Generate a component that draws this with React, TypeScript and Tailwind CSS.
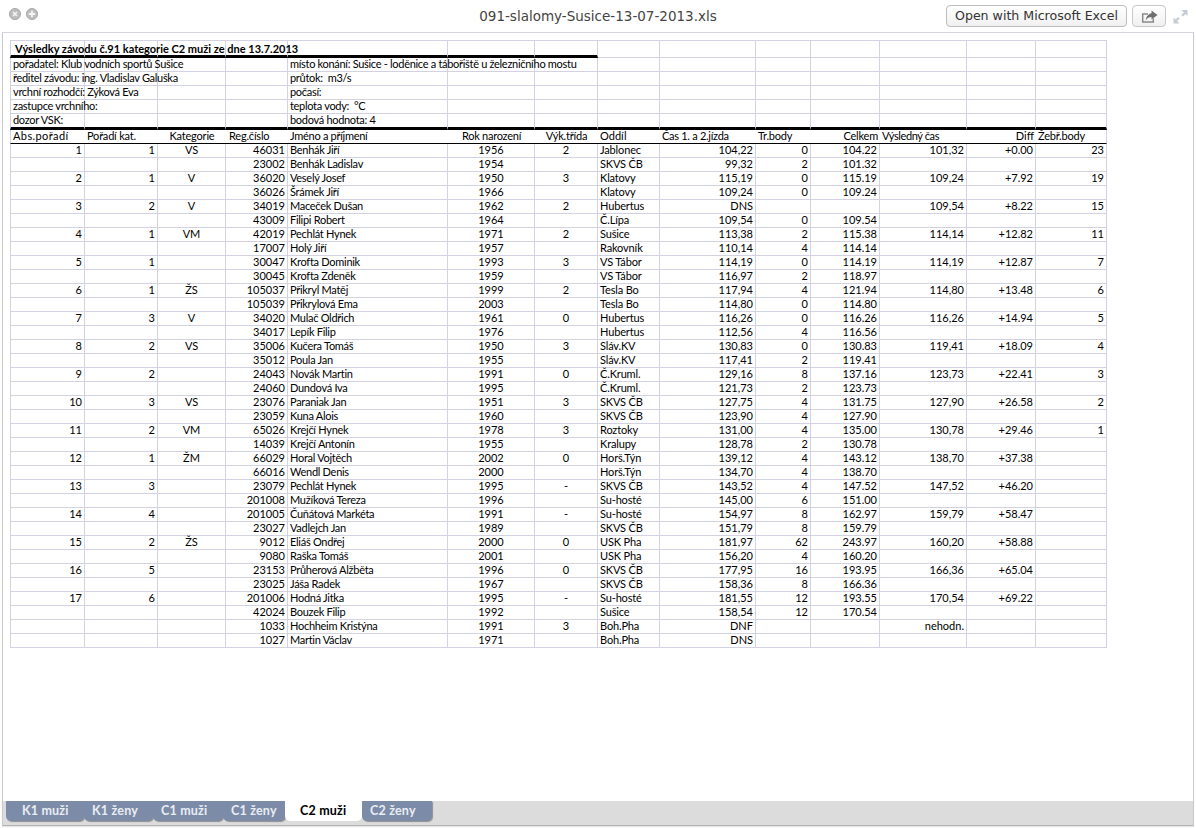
const widths = [75, 73, 68, 62, 160, 87, 63, 62, 96, 55, 69, 87, 69, 71];
const aligns = [
  "text-right",
  "text-right",
  "text-center",
  "text-right",
  "text-left tracking-[-0.28px]",
  "text-center",
  "text-center",
  "text-left tracking-[-0.15px]",
  "text-right",
  "text-right",
  "text-right",
  "text-right",
  "text-right",
  "text-right",
];

const headers = [
  ["Abs.pořadí", "text-left tracking-[0.4px]"],
  ["Pořadí kat.", "text-left pl-[2px] tracking-[-0.2px]"],
  ["Kategorie", "text-center tracking-[-0.2px]"],
  ["Reg.číslo", "text-left tracking-[-0.2px] pl-[3px]"],
  ["Jméno a příjmení", "text-left tracking-[-0.28px]"],
  ["Rok narození", "text-center tracking-[-0.25px]"],
  ["Výk.třída", "text-center tracking-[-0.2px]"],
  ["Oddíl", "text-left"],
  ["Čas 1. a 2.jízda", "text-left tracking-[-0.28px]"],
  ["Tr.body", "text-left tracking-[-0.2px]"],
  ["Celkem", "text-right tracking-[-0.2px]"],
  ["Výsledný čas", "text-left tracking-[-0.4px]"],
  ["Diff", "text-right"],
  ["Žebř.body", "text-left tracking-[-0.2px]"],
];

const info = [
  ["pořadatel: Klub vodních sportů Sušice", "místo konání: Sušice - loděnice a tábořiště u železničního mostu"],
  ["ředitel závodu: ing. Vladislav Galuška", "průtok:  m3/s"],
  ["vrchní rozhodčí: Zýková Eva", "počasí:"],
  ["zastupce vrchního:", "teplota vody:  °C"],
  ["dozor VSK:", "bodová hodnota: 4"],
];

const rows = `1|1|VS|46031|Benhák Jiří|1956|2|Jablonec|104,22|0|104.22|101,32|+0.00|23
|||23002|Benhák Ladislav|1954||SKVS ČB|99,32|2|101.32|||
2|1|V|36020|Veselý Josef|1950|3|Klatovy|115,19|0|115.19|109,24|+7.92|19
|||36026|Šrámek Jiří|1966||Klatovy|109,24|0|109.24|||
3|2|V|34019|Maceček Dušan|1962|2|Hubertus|DNS|||109,54|+8.22|15
|||43009|Filipi Robert|1964||Č.Lípa|109,54|0|109.54|||
4|1|VM|42019|Pechlát Hynek|1971|2|Sušice|113,38|2|115.38|114,14|+12.82|11
|||17007|Holý Jiří|1957||Rakovník|110,14|4|114.14|||
5|1||30047|Krofta Dominik|1993|3|VS Tábor|114,19|0|114.19|114,19|+12.87|7
|||30045|Krofta Zdeněk|1959||VS Tábor|116,97|2|118.97|||
6|1|ŽS|105037|Přikryl Matěj|1999|2|Tesla Bo|117,94|4|121.94|114,80|+13.48|6
|||105039|Přikrylová Ema|2003||Tesla Bo|114,80|0|114.80|||
7|3|V|34020|Mulač Oldřich|1961|0|Hubertus|116,26|0|116.26|116,26|+14.94|5
|||34017|Lepík Filip|1976||Hubertus|112,56|4|116.56|||
8|2|VS|35006|Kučera Tomáš|1950|3|Sláv.KV|130,83|0|130.83|119,41|+18.09|4
|||35012|Poula Jan|1955||Sláv.KV|117,41|2|119.41|||
9|2||24043|Novák Martin|1991|0|Č.Kruml.|129,16|8|137.16|123,73|+22.41|3
|||24060|Dundová Iva|1995||Č.Kruml.|121,73|2|123.73|||
10|3|VS|23076|Paraniak Jan|1951|3|SKVS ČB|127,75|4|131.75|127,90|+26.58|2
|||23059|Kuna Alois|1960||SKVS ČB|123,90|4|127.90|||
11|2|VM|65026|Krejčí Hynek|1978|3|Roztoky|131,00|4|135.00|130,78|+29.46|1
|||14039|Krejčí Antonín|1955||Kralupy|128,78|2|130.78|||
12|1|ŽM|66029|Horal Vojtěch|2002|0|Horš.Týn|139,12|4|143.12|138,70|+37.38|
|||66016|Wendl Denis|2000||Horš.Týn|134,70|4|138.70|||
13|3||23079|Pechlát Hynek|1995|-|SKVS ČB|143,52|4|147.52|147,52|+46.20|
|||201008|Mužíková Tereza|1996||Su-hosté|145,00|6|151.00|||
14|4||201005|Čuňátová Markéta|1991|-|Su-hosté|154,97|8|162.97|159,79|+58.47|
|||23027|Vadlejch Jan|1989||SKVS ČB|151,79|8|159.79|||
15|2|ŽS|9012|Eliáš Ondřej|2000|0|USK Pha|181,97|62|243.97|160,20|+58.88|
|||9080|Raška Tomáš|2001||USK Pha|156,20|4|160.20|||
16|5||23153|Průherová Alžběta|1996|0|SKVS ČB|177,95|16|193.95|166,36|+65.04|
|||23025|Jáša Radek|1967||SKVS ČB|158,36|8|166.36|||
17|6||201006|Hodná Jitka|1995|-|Su-hosté|181,55|12|193.55|170,54|+69.22|
|||42024|Bouzek Filip|1992||Sušice|158,54|12|170.54|||
|||1033|Hochheim Kristýna|1991|3|Boh.Pha|DNF|||nehodn.||
|||1027|Martin Václav|1971||Boh.Pha|DNS|||||`
  .split("\n")
  .map((r) => r.split("|"));

const tabs = [
  ["K1 muži", "w-[78px] pl-[16px]"],
  ["K1 ženy", "w-[69px] pl-[8px]"],
  ["C1 muži", "w-[70px] pl-[8px]"],
  ["C1 ženy", "w-[62px] pl-[8px]"],
  ["C2 muži", "w-[77px] pl-[15px]"],
  ["C2 ženy", "w-[70px] pl-[8px]"],
];

const grid = "border-[#d2d2e2]";
const cell = `border-r border-b ${grid} px-[2px] pb-[2px] whitespace-pre overflow-visible`;
const thickCell = "border-r border-r-[#d2d2e2] border-b-[3px] border-b-black";

export default function App() {
  return (
    <div className="w-[1196px] h-[828px] flex flex-col bg-white font-['Lato','Liberation_Sans',sans-serif] overflow-hidden">
      <div className="h-[32px] shrink-0 flex items-center relative pl-[9px] pr-[8px]">
        <div className="flex gap-[5px] items-center -mt-[4px]">
          <svg width="12" height="12" viewBox="0 0 12 12">
            <circle cx="6" cy="6" r="5.5" fill="#bdbdbd" stroke="#a6a6a6" strokeWidth="1" />
            <path d="M4 4l4 4M8 4l-4 4" stroke="#f4f4f4" strokeWidth="1.6" />
          </svg>
          <svg width="12" height="12" viewBox="0 0 12 12">
            <circle cx="6" cy="6" r="5.5" fill="#bdbdbd" stroke="#a6a6a6" strokeWidth="1" />
            <path d="M6 2.8v6.4M2.8 6h6.4" stroke="#f4f4f4" strokeWidth="1.8" />
          </svg>
        </div>
        <div className="absolute left-0 right-0 top-[8px] text-center text-[13.5px] leading-[16px] text-[#444] font-['DejaVu_Sans',sans-serif]">
          091-slalomy-Susice-13-07-2013.xls
        </div>
        <div className="ml-auto flex items-center">
          <button className="w-[181px] h-[22px] rounded-[4px] border border-[#bdbdbd] bg-linear-to-b from-white to-[#f0f0f0] text-[12.6px] text-[#333] font-['DejaVu_Sans',sans-serif] leading-none">
            Open with Microsoft Excel
          </button>
          <button className="ml-[5px] w-[34px] h-[22px] rounded-[4px] border border-[#c8c8c8] bg-linear-to-b from-white to-[#f0f0f0] flex items-center justify-center">
            <svg width="17" height="13" viewBox="0 0 17 13">
              <path d="M7 4H1.7v8h10.6V8.5" fill="none" stroke="#8a8a8a" strokeWidth="1.5" />
              <path d="M10.5 0.5l6 4.5-6 4.5V7C8 7 6.2 8 4.8 10.2 5.2 6.4 7.6 3.6 10.5 3.2z" fill="#6f6f6f" />
            </svg>
          </button>
          <svg className="ml-[7px]" width="15" height="15" viewBox="0 0 15 15">
            <path d="M8.5 1H14.5v6l-2-2-2.6 2.6-1.6-1.6 2.6-2.6z" fill="#c3ccd2" />
            <path d="M6.5 14.5H0.5v-6l2 2 2.6-2.6 1.6 1.6-2.6 2.6z" fill="#c3ccd2" />
          </svg>
        </div>
      </div>

      <div className="flex-1 ml-[2px] mr-[2px] mb-[2px] flex flex-col border-x border-t border-b border-t-[#d5d5dd] border-x-[#c9c9d0] border-b-[#b5b5b5] shadow-[0_1px_1px_rgba(0,0,0,0.1)] min-h-0">
        <div className="flex-1 min-h-0 pl-[7px] pt-[7px]">
          <table className="table-fixed border-separate border-spacing-0 text-[11px] leading-[11px] text-black w-[1097px] border-t border-[#d2d2e2]">
            <colgroup>
              {widths.map((w, i) => (
                <col key={i} style={{ width: w }} />
              ))}
            </colgroup>
            <tbody>
              <tr className="h-[17px]">
                <td className={`border-l border-l-[#d2d2e2] ${thickCell} pl-[4px] whitespace-nowrap overflow-visible font-bold`}>
                  Výsledky závodu č.91 kategorie C2 muži ze dne 13.7.2013
                </td>
                {widths.slice(1).map((_, i) => (
                  <td key={i} className={i + 1 < 7 ? thickCell : cell} />
                ))}
              </tr>
              {info.map(([a, b], n) => (
                <tr key={n} className={n === 4 ? "h-[16px]" : "h-[14px]"}>
                  {widths.map((_, i) => {
                    const line = n === 4 ? thickCell : `border-r border-b ${grid}`;
                    const left = i === 0 ? "border-l border-l-[#d2d2e2]" : "";
                    const txt = i === 0 ? a : i === 4 ? b : "";
                    return (
                      <td key={i} className={`${line} ${left} px-[2px] pb-[2px] whitespace-pre overflow-visible tracking-[-0.3px]`}>
                        {txt}
                      </td>
                    );
                  })}
                </tr>
              ))}
              <tr className="h-[14px]">
                {headers.map(([h, a], i) => (
                  <td
                    key={i}
                    className={`border-b border-b-black px-[2px] pb-[2px] whitespace-nowrap overflow-visible ${a} ${i === 0 ? "border-l border-l-[#d2d2e2]" : ""} ${i === 13 ? "border-r border-r-[#d2d2e2]" : ""}`}
                  >
                    {h}
                  </td>
                ))}
              </tr>
              {rows.map((r, n) => (
                <tr key={n} className="h-[14px]">
                  {widths.map((_, i) => (
                    <td key={i} className={`${cell} ${aligns[i]} ${i === 0 ? "border-l" : ""}`}>
                      {r[i] ?? ""}
                    </td>
                  ))}
                </tr>
              ))}
            </tbody>
          </table>
        </div>
        <div className="h-[24px] shrink-0 bg-[#dcdcdc] flex items-start pl-[3px]">
          {tabs.map(([t, w], i) => (
            <div
              key={t}
              className={`${w} h-[20px] flex items-center text-[12.5px] tracking-[0.2px] font-bold rounded-b-[5px] ${
                i === 4 ? "bg-white text-black" : "bg-[#7c8ca8] text-[#eaedf3] shadow-[1px_1px_1px_rgba(0,0,0,0.35)]"
              }`}
            >
              {t}
            </div>
          ))}
        </div>
      </div>
    </div>
  );
}
